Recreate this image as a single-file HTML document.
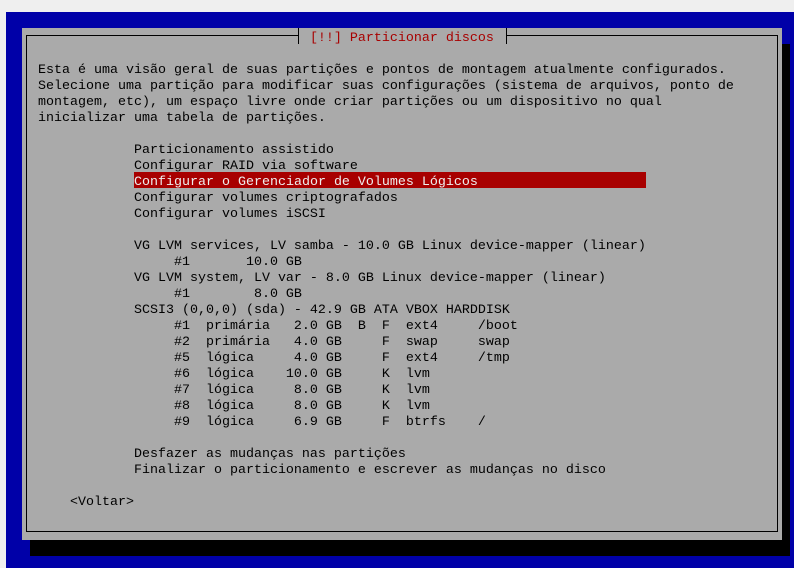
<!DOCTYPE html>
<html><head><meta charset="utf-8"><style>
html,body{margin:0;padding:0;}
body{width:794px;height:568px;background:#efefef;position:relative;overflow:hidden;font-family:"Liberation Mono","DejaVu Sans Mono",monospace;}
.abs{position:absolute;}
pre{margin:0;font-family:"Liberation Mono","DejaVu Sans Mono",monospace;font-size:13.333px;line-height:16px;color:#000;white-space:pre;}
</style></head><body>
<div class="abs" style="left:6px;top:12px;width:788px;height:556px;background:#0000a8"></div>
<div class="abs" style="left:30px;top:540px;width:760px;height:16px;background:#000"></div>
<div class="abs" style="left:782px;top:44px;width:8px;height:512px;background:#000"></div>
<div class="abs" style="left:22px;top:28px;width:760px;height:512px;background:#aaaaaa"></div>
<div class="abs" style="left:26px;top:35px;width:752px;height:497px;box-sizing:border-box;border:1px solid #000"></div>
<div class="abs" style="left:294px;top:28px;width:216px;height:16px;background:#aaaaaa"></div>
<div class="abs" style="left:294px;top:35px;width:4px;height:1px;background:#000"></div>
<div class="abs" style="left:298px;top:28px;width:1px;height:16px;background:#000"></div>
<div class="abs" style="left:507px;top:35px;width:4px;height:1px;background:#000"></div>
<div class="abs" style="left:506px;top:28px;width:1px;height:16px;background:#000"></div>
<div class="abs" style="left:134px;top:172px;width:512px;height:16px;background:#a80000"></div>
<pre class="abs" style="left:6px;top:15px">

                                      <span style="color:#a80000">[!!] Particionar discos</span>

    Esta é uma visão geral de suas partições e pontos de montagem atualmente configurados.
    Selecione uma partição para modificar suas configurações (sistema de arquivos, ponto de
    montagem, etc), um espaço livre onde criar partições ou um dispositivo no qual
    inicializar uma tabela de partições.

                Particionamento assistido
                Configurar RAID via software
                <span style="color:#eeeeee">Configurar o Gerenciador de Volumes Lógicos</span>
                Configurar volumes criptografados
                Configurar volumes iSCSI

                VG LVM services, LV samba - 10.0 GB Linux device-mapper (linear)
                     #1       10.0 GB
                VG LVM system, LV var - 8.0 GB Linux device-mapper (linear)
                     #1        8.0 GB
                SCSI3 (0,0,0) (sda) - 42.9 GB ATA VBOX HARDDISK
                     #1  primária   2.0 GB  B  F  ext4     /boot
                     #2  primária   4.0 GB     F  swap     swap
                     #5  lógica     4.0 GB     F  ext4     /tmp
                     #6  lógica    10.0 GB     K  lvm
                     #7  lógica     8.0 GB     K  lvm
                     #8  lógica     8.0 GB     K  lvm
                     #9  lógica     6.9 GB     F  btrfs    /

                Desfazer as mudanças nas partições
                Finalizar o particionamento e escrever as mudanças no disco

        &lt;Voltar&gt;
</pre>
</body></html>
